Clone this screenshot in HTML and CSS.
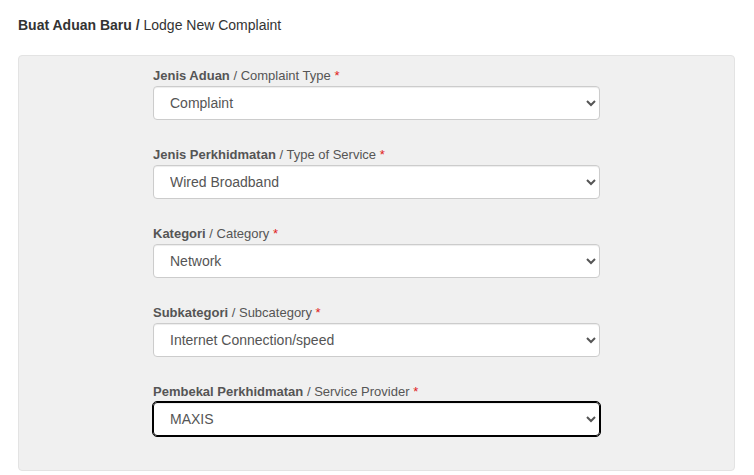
FILE: index.html
```html
<!DOCTYPE html>
<html>
<head>
<meta charset="utf-8">
<link rel="stylesheet" href="styles.css">
</head>
<body>
<h4 class="title"><b>Buat Aduan Baru /</b> Lodge New Complaint</h4>
<div class="well">
  <div class="col">
    <div class="group">
      <label class="lbl"><b>Jenis Aduan</b> / Complaint Type <span class="req">*</span></label>
      <select class="ctrl"><option>Complaint</option></select>
    </div>
    <div class="group">
      <label class="lbl"><b>Jenis Perkhidmatan</b> / Type of Service <span class="req">*</span></label>
      <select class="ctrl"><option>Wired Broadband</option></select>
    </div>
    <div class="group">
      <label class="lbl"><b>Kategori</b> / Category <span class="req">*</span></label>
      <select class="ctrl"><option>Network</option></select>
    </div>
    <div class="group">
      <label class="lbl"><b>Subkategori</b> / Subcategory <span class="req">*</span></label>
      <select class="ctrl"><option>Internet Connection/speed</option></select>
    </div>
    <div class="group">
      <label class="lbl"><b>Pembekal Perkhidmatan</b> / Service Provider <span class="req">*</span></label>
      <select class="ctrl focused"><option>MAXIS</option></select>
    </div>
  </div>
</div>
</body>
</html>
```
FILE: styles.css
```css
html, body {
  margin: 0;
  padding: 0;
  background: #fff;
  font-family: "Liberation Sans", Arial, Helvetica, sans-serif;
  font-size: 14px;
  color: #333;
}
.title {
  margin: 0;
  padding: 15px 18px 0;
  font-size: 14px;
  font-weight: normal;
  line-height: 20px;
  height: 55px;
  box-sizing: border-box;
  color: #333;
}
.title b {
  font-weight: bold;
}
.well {
  margin: 0 19px 0 18px;
  background: #f0f0f0;
  border: 1px solid #e3e3e3;
  border-radius: 4px;
  padding: 10px 0 34px;
}
.col {
  margin-left: 134px;
  width: 447px;
}
.group + .group {
  margin-top: 25px;
}
.lbl {
  display: block;
  font-size: 13px;
  line-height: 20px;
  margin-bottom: 0;
  color: #555;
}
.lbl b {
  font-weight: bold;
}
.req {
  color: #e02020;
}
.ctrl {
  display: block;
  width: 100%;
  height: 34px;
  box-sizing: border-box;
  padding: 6px 12px;
  font-family: inherit;
  font-size: 14px;
  color: #555;
  background: #fff;
  border: 1px solid #ccc;
  border-radius: 4px;
  box-shadow: inset 0 1px 1px rgba(0,0,0,.075);
}
.focused {
  border-color: #000;
  outline: 1px solid #000;
}
```
